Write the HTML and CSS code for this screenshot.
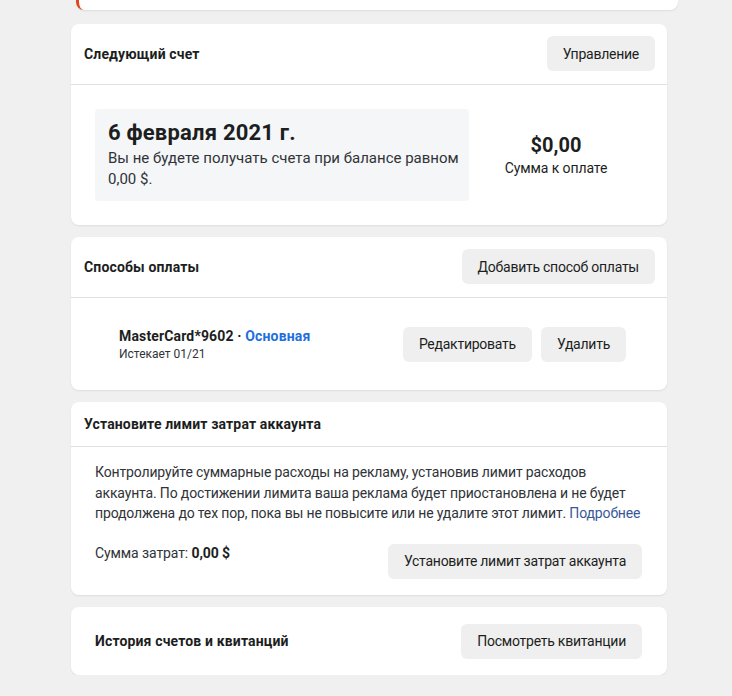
FILE: index.html
```html
<!DOCTYPE html>
<html lang="ru">
<head>
<meta charset="utf-8">
<link rel="stylesheet" href="styles.css">
</head>
<body>
<div class="page">
  <div class="top-card"></div>

  <section class="card">
    <div class="card-head">
      <h2 class="title">Следующий счет</h2>
      <button class="btn">Управление</button>
    </div>
    <div class="bill-body">
      <div class="date-box">
        <div class="date">6 февраля 2021 г.</div>
        <div class="date-note">Вы не будете получать счета при балансе равном 0,00 $.</div>
      </div>
      <div class="amount">
        <div class="amount-val">$0,00</div>
        <div class="amount-label">Сумма к оплате</div>
      </div>
    </div>
  </section>

  <section class="card">
    <div class="card-head">
      <h2 class="title">Способы оплаты</h2>
      <button class="btn">Добавить способ оплаты</button>
    </div>
    <div class="pay-body">
      <div class="pay-info">
        <div class="pay-name">MasterCard*9602 · <span class="primary">Основная</span></div>
        <div class="pay-exp">Истекает 01/21</div>
      </div>
      <div class="pay-actions">
        <button class="btn">Редактировать</button>
        <button class="btn">Удалить</button>
      </div>
    </div>
  </section>

  <section class="card">
    <div class="card-head small">
      <h2 class="title">Установите лимит затрат аккаунта</h2>
    </div>
    <div class="limit-body">
      <p class="limit-text">Контролируйте суммарные расходы на рекламу, установив лимит расходов аккаунта. По достижении лимита ваша реклама будет приостановлена и не будет продолжена до тех пор, пока вы не повысите или не удалите этот лимит. <a class="link" href="#">Подробнее</a></p>
      <div class="limit-row">
        <div class="spent">Сумма затрат: <b>0,00 $</b></div>
        <button class="btn">Установите лимит затрат аккаунта</button>
      </div>
    </div>
  </section>

  <section class="card history">
    <h2 class="title">История счетов и квитанций</h2>
    <button class="btn">Посмотреть квитанции</button>
  </section>
</div>
</body>
</html>
```
FILE: styles.css
```css
* { box-sizing: border-box; }
html, body { margin: 0; padding: 0; }
body {
  background: #f0f0f0;
  font-family: Roboto, "Liberation Sans", Arial, sans-serif;
  font-size: 14px;
  color: #1c1e21;
}
.page {
  width: 596px;
  margin-left: 71px;
  display: flex;
  flex-direction: column;
  gap: 12px;
}
.top-card {
  height: 10px;
  margin-left: 5px;
  margin-right: -11px;
  margin-bottom: 2px;
  background: #fff;
  border-left: 3px solid #e0461f;
  border-radius: 0 0 8px 8px;
  box-shadow: 0 1px 2px rgba(0,0,0,0.08);
}
.card {
  background: #fff;
  border-radius: 8px;
  box-shadow: 0 1px 2px rgba(0,0,0,0.08);
}
.card-head {
  height: 61px;
  display: flex;
  align-items: center;
  justify-content: space-between;
  padding: 0 12px 1px 13px;
  border-bottom: 1px solid #dddfe2;
}
.card-head.small { height: 45px; }
.title {
  margin: 0;
  font-size: 14px;
  font-weight: 700;
  letter-spacing: 0.15px;
  color: #1c1e21;
}
.btn {
  height: 35px;
  padding: 0 16px;
  border: 0;
  border-radius: 6px;
  background: #efefef;
  font-family: inherit;
  font-size: 14px;
  letter-spacing: -0.25px;
  color: #1c1e21;
}
.bill-body {
  display: flex;
  align-items: center;
  padding: 24px;
}
.date-box {
  width: 374px;
  background: #f5f6f7;
  border-radius: 4px;
  padding: 11px 13px 11px;
}
.date {
  font-size: 22px;
  font-weight: 700;
  letter-spacing: 0.2px;
  line-height: 26px;
}
.date-note {
  margin-top: 2px;
  font-size: 15px;
  line-height: 21px;
  width: 360px;
  color: #303338;
}
.amount {
  flex: 1;
  text-align: center;
}
.amount-val {
  font-size: 20px;
  font-weight: 700;
  line-height: 26px;
}
.amount-label {
  line-height: 20px;
  letter-spacing: -0.1px;
}
.pay-body {
  height: 92px;
  display: flex;
  align-items: center;
  justify-content: space-between;
  padding: 0 41px 0 48px;
}
.pay-info { margin-top: 1px; }
.pay-name {
  font-weight: 700;
  letter-spacing: 0.15px;
  line-height: 18px;
}
.primary { color: #216fdb; }
.pay-exp {
  font-size: 12px;
  line-height: 18px;
  color: #303338;
}
.pay-actions {
  display: flex;
  gap: 9px;
}
.limit-body {
  padding: 15px 20px 16px 24px;
}
.limit-text {
  margin: 0;
  line-height: 20.5px;
  letter-spacing: -0.15px;
  color: #303338;
}
.link {
  color: #385898;
  text-decoration: none;
}
.limit-row {
  margin-top: 20px;
  margin-right: 5px;
  display: flex;
  justify-content: space-between;
  align-items: flex-start;
}
.spent { line-height: 18px; letter-spacing: -0.1px; color: #303338; }
.spent b { color: #1c1e21; }
.history {
  display: flex;
  align-items: center;
  justify-content: space-between;
  padding: 17px 25px 16px 24px;
}
```
